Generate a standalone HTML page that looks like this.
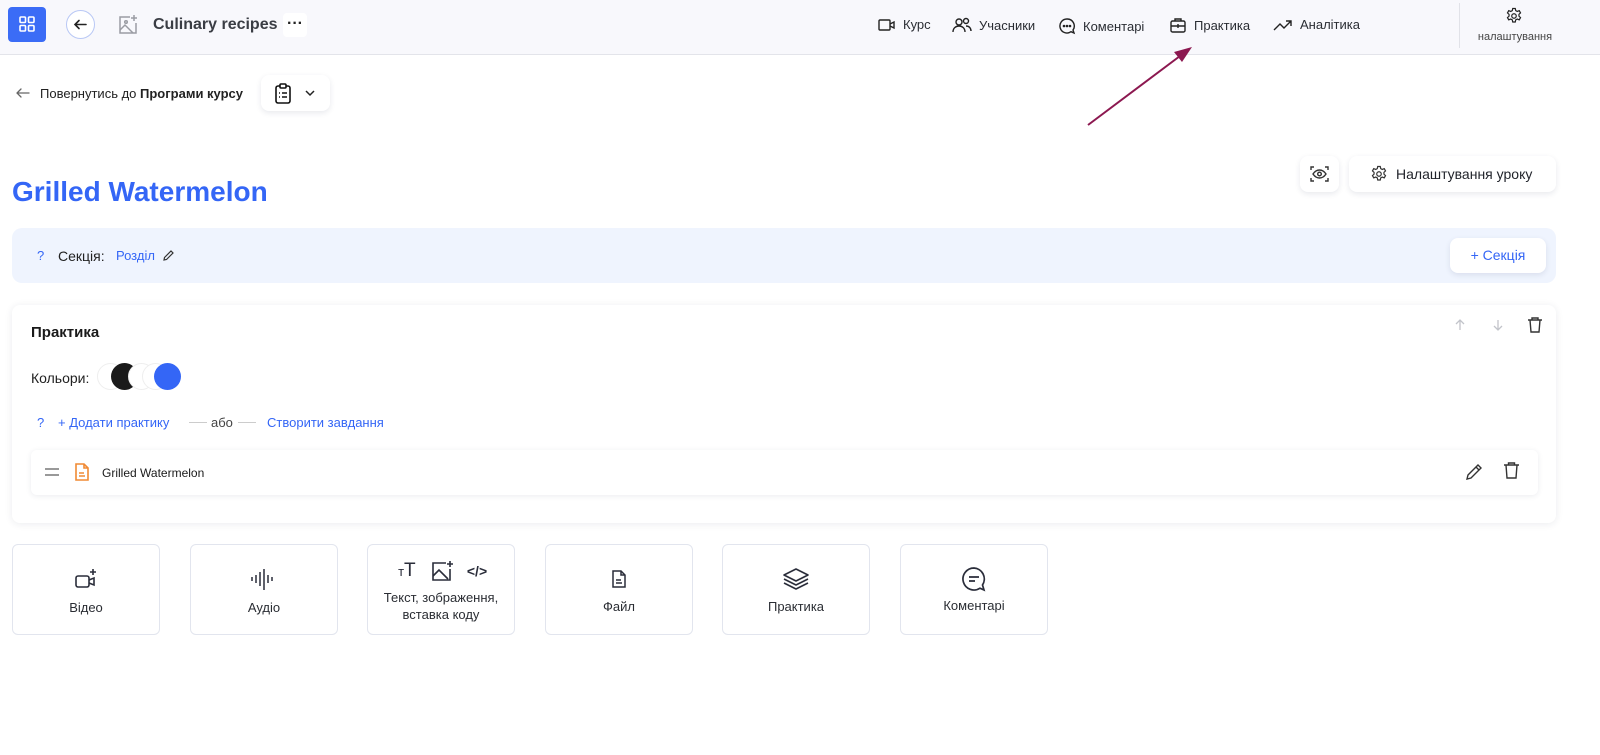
<!DOCTYPE html>
<html><head><meta charset="utf-8"><style>
*{box-sizing:border-box;margin:0;padding:0}
body{width:1600px;height:755px;overflow:hidden;background:#fff;font-family:"Liberation Sans","DejaVu Sans",sans-serif;color:#1f2229;position:relative}
.a{position:absolute}
svg{display:block}
.nav{position:absolute;top:17px;font-size:13px;color:#2a2d33;display:flex;align-items:center;gap:7px}
.tile{position:absolute;top:544px;width:148px;height:91px;border:1px solid #e2e5ee;border-radius:6px;background:#fff;text-align:center;font-size:13px;color:#2a2d33}
.btn{position:absolute;background:#fff;border-radius:8px;box-shadow:0 2px 6px rgba(30,40,80,.1)}
</style></head><body>
<div class="a" style="left:0;top:0;width:1600px;height:55px;background:#f8f8fc;border-bottom:1px solid #e3e4ea"></div>
<div class="a" style="left:8px;top:7px;width:38px;height:35px;background:#3b6cf6;border-radius:4px">
<svg width="38" height="35" viewBox="0 0 38 35" fill="none" stroke="#fff" stroke-width="1.6"><rect x="12" y="10" width="5.5" height="5.5" rx="1"/><rect x="20.5" y="10" width="5.5" height="5.5" rx="1"/><rect x="12" y="18.5" width="5.5" height="5.5" rx="1"/><rect x="20.5" y="18.5" width="5.5" height="5.5" rx="1"/></svg></div>
<div class="a" style="left:66px;top:10px;width:29px;height:29px;border-radius:50%;border:1px solid #b9c8f5;background:#fff">
<svg width="27" height="27" viewBox="0 0 27 27" fill="none" stroke="#222" stroke-width="1.6" stroke-linecap="round"><path d="M8 13.5h11M12 9.5l-4 4 4 4"/></svg></div>
<svg class="a" style="left:117px;top:14px" width="22" height="22" viewBox="0 0 22 22" fill="none" stroke="#9a9ca3" stroke-width="1.5"><path d="M13 3H3v16h16V9"/><path d="M3 16l5-5 8 8"/><circle cx="9" cy="8" r="1.3"/><path d="M17 1v6M14 4h6"/></svg>
<div class="a" style="left:153px;top:16px;font-size:16px;font-weight:bold;color:#3a3d44">Culinary recipes</div>
<div class="a" style="left:283px;top:13px;width:24px;height:24px;background:#fff;border-radius:4px;text-align:center;font-size:16px;line-height:22px;font-weight:bold;color:#222">···</div>

<div class="nav" style="left:878px"><svg width="18" height="14" viewBox="0 0 18 14" fill="none" stroke="#222" stroke-width="1.4"><rect x="1" y="2" width="11" height="10" rx="1"/><path d="M12 6l4-2v6l-4-2"/></svg>Курс</div>
<div class="nav" style="left:952px"><svg width="20" height="16" viewBox="0 0 20 16" fill="none" stroke="#222" stroke-width="1.4"><circle cx="7" cy="5" r="3"/><circle cx="14" cy="4" r="2.5"/><path d="M1 15c0-4 3-6 6-6s6 2 6 6M14 9c3 0 5 2 5 5"/></svg>Учасники</div>
<div class="nav" style="left:1058px"><svg width="18" height="18" viewBox="0 0 18 18" fill="none" stroke="#222" stroke-width="1.4"><path d="M9 2a7 7 0 1 0 4 12.7L16 16l-1-3A7 7 0 0 0 9 2z"/><circle cx="6" cy="9" r=".6" fill="#222"/><circle cx="9" cy="9" r=".6" fill="#222"/><circle cx="12" cy="9" r=".6" fill="#222"/></svg>Коментарі</div>
<div class="nav" style="left:1169px"><svg width="18" height="17" viewBox="0 0 18 17" fill="none" stroke="#222" stroke-width="1.4"><rect x="2" y="4" width="14" height="11" rx="1.5"/><path d="M6 4V2h6v2M2 9h14M9 7v4"/></svg>Практика</div>
<div class="nav" style="left:1273px"><svg width="20" height="14" viewBox="0 0 20 14" fill="none" stroke="#222" stroke-width="1.4"><path d="M1 12l6-6 4 4 7-7M13 3h5v5"/></svg>Аналітика</div>
<div class="a" style="left:1459px;top:3px;width:1px;height:45px;background:#e1e2e8"></div>
<svg class="a" style="left:1505px;top:7px" width="18" height="18" viewBox="0 0 24 24" fill="none" stroke="#222" stroke-width="1.6"><circle cx="12" cy="12" r="3"/><path d="M10.3 2h3.4l.6 2.8 2 1.1 2.7-1 1.7 3-2.1 1.9v2.4l2.1 1.9-1.7 3-2.7-1-2 1.1-.6 2.8h-3.4l-.6-2.8-2-1.1-2.7 1-1.7-3 2.1-1.9v-2.4L3.3 7.9l1.7-3 2.7 1 2-1.1z"/></svg>
<div class="a" style="left:1474px;top:31px;width:82px;text-align:center;font-size:11px;color:#444">налаштування</div>

<svg class="a" style="left:1080px;top:40px" width="120" height="92"><path d="M8 85L104 13" stroke="#8c1850" stroke-width="2"/><path d="M112 7L94 12l8 10z" fill="#8c1850"/></svg>

<svg class="a" style="left:15px;top:86px" width="16" height="14" viewBox="0 0 16 14" fill="none" stroke="#666" stroke-width="1.3" stroke-linecap="round"><path d="M2 7h12M6 3L2 7l4 4"/></svg>
<div class="a" style="left:40px;top:86px;font-size:13px;color:#222">Повернутись до <b>Програми курсу</b></div>
<div class="btn" style="left:261px;top:75px;width:69px;height:36px">
<svg class="a" style="left:12px;top:8px" width="20" height="21" viewBox="0 0 20 21" fill="none" stroke="#111" stroke-width="1.6"><rect x="3" y="3" width="14" height="17" rx="2"/><rect x="7" y="1" width="6" height="4" rx="1" fill="#fff"/><path d="M6 10h1M9 10h5M6 14h1M9 14h5"/></svg>
<svg class="a" style="left:43px;top:14px" width="12" height="8" viewBox="0 0 12 8" fill="none" stroke="#222" stroke-width="1.5"><path d="M2 2l4 4 4-4"/></svg></div>

<div class="a" style="left:12px;top:176px;font-size:28px;font-weight:bold;color:#3466f6">Grilled Watermelon</div>
<div class="btn" style="left:1300px;top:156px;width:39px;height:36px">
<svg class="a" style="left:10px;top:9px" width="19" height="18" viewBox="0 0 19 18" fill="none" stroke="#333" stroke-width="1.4"><path d="M1 5V2h3M15 2h3v3M18 13v3h-3M4 16H1v-3"/><path d="M3 9c2-3 4-4 6.5-4S14 6 16 9c-2 3-4 4-6.5 4S5 12 3 9z"/><circle cx="9.5" cy="9" r="1.8"/></svg></div>
<div class="btn" style="left:1349px;top:156px;width:207px;height:36px">
<svg class="a" style="left:21px;top:9px" width="18" height="18" viewBox="0 0 24 24" fill="none" stroke="#333" stroke-width="1.6"><circle cx="12" cy="12" r="3"/><path d="M10.3 2h3.4l.6 2.8 2 1.1 2.7-1 1.7 3-2.1 1.9v2.4l2.1 1.9-1.7 3-2.7-1-2 1.1-.6 2.8h-3.4l-.6-2.8-2-1.1-2.7 1-1.7-3 2.1-1.9v-2.4L3.3 7.9l1.7-3 2.7 1 2-1.1z"/></svg>
<div class="a" style="left:47px;top:10px;font-size:14px;color:#1f2229">Налаштування уроку</div></div>

<div class="a" style="left:12px;top:228px;width:1544px;height:55px;background:#eff4fe;border-radius:10px"></div>
<div class="a" style="left:37px;top:248px;font-size:13px;color:#3466f6">?</div>
<div class="a" style="left:58px;top:248px;font-size:14px;color:#222">Секція:</div>
<div class="a" style="left:116px;top:248px;font-size:13px;color:#3466f6">Розділ</div>
<svg class="a" style="left:162px;top:249px" width="13" height="13" viewBox="0 0 13 13" fill="none" stroke="#333" stroke-width="1.2"><path d="M2 11l.5-2.5L9 2l2 2-6.5 6.5z"/></svg>
<div class="btn" style="left:1450px;top:238px;width:96px;height:35px;font-size:14px;color:#3466f6;text-align:center;line-height:35px">+ Секція</div>

<div class="a" style="left:12px;top:305px;width:1544px;height:218px;background:#fff;border-radius:8px;box-shadow:0 1px 8px rgba(30,40,80,.09)"></div>
<div class="a" style="left:31px;top:324px;font-size:15px;font-weight:bold;color:#1a1a1a">Практика</div>
<svg class="a" style="left:1453px;top:318px" width="14" height="14" viewBox="0 0 14 14" fill="none" stroke="#c2c4ca" stroke-width="1.3"><path d="M7 12V2M3 6l4-4 4 4"/></svg>
<svg class="a" style="left:1491px;top:318px" width="14" height="14" viewBox="0 0 14 14" fill="none" stroke="#c2c4ca" stroke-width="1.3"><path d="M7 2v10M3 8l4 4 4-4"/></svg>
<svg class="a" style="left:1527px;top:316px" width="16" height="17" viewBox="0 0 16 17" fill="none" stroke="#333" stroke-width="1.4"><path d="M1 4h14M5 4V2h6v2M3 4l1 12h8l1-12"/></svg>
<div class="a" style="left:31px;top:370px;font-size:14px;color:#222">Кольори:</div>
<div class="a" style="left:97px;top:363px;width:27px;height:27px;border-radius:50%;background:#fff;border:1px solid #eee"></div>
<div class="a" style="left:111px;top:363px;width:27px;height:27px;border-radius:50%;background:#1a1a1a"></div>
<div class="a" style="left:128px;top:363px;width:27px;height:27px;border-radius:50%;background:#fff;border:1px solid #eee"></div>
<div class="a" style="left:142px;top:363px;width:27px;height:27px;border-radius:50%;background:#fff;border:1px solid #eee"></div>
<div class="a" style="left:154px;top:363px;width:27px;height:27px;border-radius:50%;background:#3466f6"></div>
<div class="a" style="left:37px;top:415px;font-size:13px;color:#3466f6">?</div>
<div class="a" style="left:58px;top:415px;font-size:13px;color:#3466f6">+ Додати практику</div>
<div class="a" style="left:189px;top:422px;width:18px;height:1px;background:#ccc"></div>
<div class="a" style="left:211px;top:415px;font-size:13px;color:#444">або</div>
<div class="a" style="left:238px;top:422px;width:18px;height:1px;background:#ccc"></div>
<div class="a" style="left:267px;top:415px;font-size:13px;color:#3466f6">Створити завдання</div>

<div class="a" style="left:31px;top:450px;width:1507px;height:45px;background:#fff;border-radius:6px;box-shadow:0 1px 6px rgba(30,40,80,.09)"></div>
<div class="a" style="left:45px;top:468px;width:14px;height:1.5px;background:#999"></div>
<div class="a" style="left:45px;top:474px;width:14px;height:1.5px;background:#999"></div>
<svg class="a" style="left:74px;top:462px" width="16" height="20" viewBox="0 0 16 20" fill="none" stroke="#f08a34" stroke-width="1.6"><path d="M2 2h8l4 4v12H2z"/><path d="M10 2v4h4M5 11h5M5 14h6"/></svg>
<div class="a" style="left:102px;top:466px;font-size:12px;color:#1a1a1a">Grilled Watermelon</div>
<svg class="a" style="left:1465px;top:462px" width="19" height="19" viewBox="0 0 19 19" fill="none" stroke="#333" stroke-width="1.4"><path d="M2 17l1-4L13 3l3 3L6 16z"/><path d="M11 5l3 3"/></svg>
<svg class="a" style="left:1503px;top:461px" width="17" height="19" viewBox="0 0 17 19" fill="none" stroke="#333" stroke-width="1.4"><path d="M1 4h15M5.5 4V2h6v2M3 4l1 13h9l1-13"/></svg>

<div class="tile" style="left:12px"><svg style="margin:23px auto 0" width="24" height="22" viewBox="0 0 24 22" fill="none" stroke="#2a2d3a" stroke-width="1.6"><rect x="2" y="8" width="13" height="11" rx="2"/><path d="M15 12l5-2v7l-5-2"/><path d="M19 1v6M16 4h6"/></svg><div style="margin-top:10px">Відео</div></div>
<div class="tile" style="left:190px"><svg style="margin:23px auto 0" width="30" height="22" viewBox="0 0 30 22" fill="none" stroke="#2a2d3a" stroke-width="1.5"><path d="M3 9v4M7 7v8M11 4v14M15 1v21M19 7v8M23 9v4"/></svg><div style="margin-top:10px">Аудіо</div></div>
<div class="tile" style="left:367px"><div style="display:flex;justify-content:center;gap:12px;margin-top:15px;align-items:center">
<div style="font-size:19px;color:#2a2d3a;width:24px"><span style="font-size:13px">т</span>Т</div>
<svg width="24" height="22" viewBox="0 0 24 22" fill="none" stroke="#2a2d3a" stroke-width="1.6"><path d="M15 3H2v17h17V9"/><path d="M2 16l6-6 9 9"/><path d="M19 1v6M16 4h6"/></svg>
<div style="font-size:14px;font-weight:bold;color:#2a2d3a">&lt;/&gt;</div></div>
<div style="margin-top:7px;line-height:17px">Текст, зображення,<br>вставка коду</div></div>
<div class="tile" style="left:545px"><svg style="margin:24px auto 0" width="16" height="20" viewBox="0 0 16 20" fill="none" stroke="#2a2d3a" stroke-width="1.5"><path d="M2 2h8l4 4v12H2z"/><path d="M10 2v4h4M5 11h5M5 14h6"/></svg><div style="margin-top:10px">Файл</div></div>
<div class="tile" style="left:722px"><svg style="margin:22px auto 0" width="28" height="24" viewBox="0 0 28 24" fill="none" stroke="#2a2d3a" stroke-width="1.6" stroke-linejoin="round"><path d="M14 2L2 8l12 6 12-6z"/><path d="M2 12l12 6 12-6M2 16l12 6 12-6"/></svg><div style="margin-top:8px">Практика</div></div>
<div class="tile" style="left:900px"><svg style="margin:21px auto 0" width="26" height="26" viewBox="0 0 26 26" fill="none" stroke="#2a2d3a" stroke-width="1.7"><path d="M13 2a11 11 0 1 0 6 20.2L23 24l-1.5-5A11 11 0 0 0 13 2z"/><path d="M8 11h10M8 15h6"/></svg><div style="margin-top:6px">Коментарі</div></div>
</body></html>
